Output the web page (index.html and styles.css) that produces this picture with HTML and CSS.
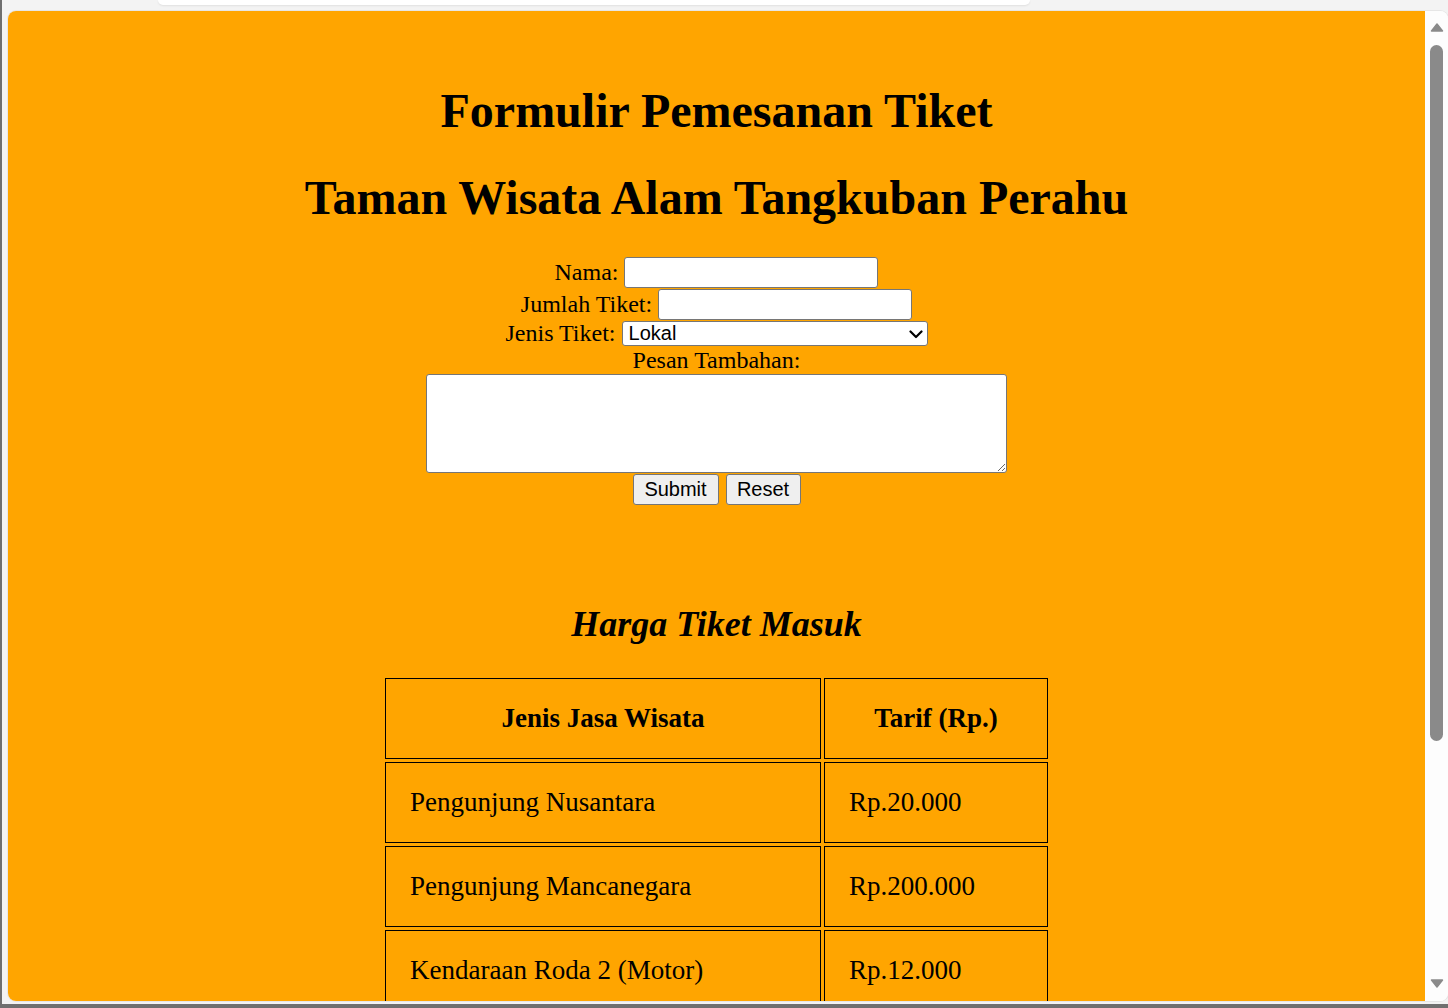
FILE: index.html
```html
<!DOCTYPE html>
<html lang="id">

<head>
     <meta charset="UTF-8">
     <meta name="viewport" content="width=device-width, initial-scale=1.0">
     <title>Formulir Pemesanan Tiket</title>
     <link rel="stylesheet" href="styles.css">
</head>

<body>
     <div class="screen">
          <div class="chromeTop">
               <div class="addressEdge"></div>
          </div>
          <div class="window">
               <main class="page">
                    <h1>Formulir Pemesanan Tiket</h1>
                    <h1>Taman Wisata Alam Tangkuban Perahu</h1>
                    <form class="orderForm">
                         <div class="field">
                              <label for="nama">Nama:</label>
                              <input type="text" id="nama" class="inputText">
                         </div>
                         <div class="field">
                              <label for="jumlah">Jumlah Tiket:</label>
                              <input type="text" id="jumlah" class="inputText">
                         </div>
                         <div class="field fieldSelect">
                              <label for="jenis">Jenis Tiket:</label>
                              <span class="selectWrap">
                                   <select id="jenis">
                                        <option>Lokal</option>
                                        <option>Mancanegara</option>
                                   </select>
                                   <svg class="chevron" width="14" height="9" viewBox="0 0 14 9">
                                        <path d="M1.5 1.5 L7 7 L12.5 1.5" fill="none" stroke="#000" stroke-width="2.2" stroke-linecap="round" stroke-linejoin="round" />
                                   </svg>
                              </span>
                         </div>
                         <div class="field fieldNote">
                              <label for="pesan">Pesan Tambahan:</label>
                         </div>
                         <textarea id="pesan"></textarea>
                         <div class="actions">
                              <button type="submit" class="btn btnSubmit">Submit</button>
                              <button type="reset" class="btn btnReset">Reset</button>
                         </div>
                    </form>

                    <h2>Harga Tiket Masuk</h2>
                    <table class="priceTable">
                         <tr>
                              <th class="colJenis">Jenis Jasa Wisata</th>
                              <th class="colTarif">Tarif (Rp.)</th>
                         </tr>
                         <tr>
                              <td>Pengunjung Nusantara</td>
                              <td>Rp.20.000</td>
                         </tr>
                         <tr>
                              <td>Pengunjung Mancanegara</td>
                              <td>Rp.200.000</td>
                         </tr>
                         <tr>
                              <td>Kendaraan Roda 2 (Motor)</td>
                              <td>Rp.12.000</td>
                         </tr>
                    </table>
               </main>
               <div class="scrollbar">
                    <svg class="arrow" width="14" height="10" viewBox="0 0 14 10">
                         <path d="M1.5 9 L7 2 L12.5 9 Z" fill="#8a8a8a" stroke="#8a8a8a" stroke-width="1.5" stroke-linejoin="round" />
                    </svg>
                    <div class="thumb"></div>
                    <svg class="arrow arrowDown" width="14" height="10" viewBox="0 0 14 10">
                         <path d="M1.5 1 L7 8 L12.5 1 Z" fill="#8a8a8a" stroke="#8a8a8a" stroke-width="1.5" stroke-linejoin="round" />
                    </svg>
               </div>
          </div>
     </div>
</body>

</html>
```

FILE: styles.css
```css
* {
     margin: 0px;
     padding: 0px;
     box-sizing: border-box;
}

body {
     background-color: #f3f3f3;
     font-family: "Liberation Serif", "Times New Roman", serif;
     overflow: hidden;
}

.screen {
     height: 1008px;
     border-left: 2px solid #6f6f6f;
     border-bottom: 4px solid #6f6f6f;
}

.chromeTop {
     height: 11px;
     padding-left: 156px;
}

.addressEdge {
     width: 872px;
     height: 5px;
     background-color: #fff;
     border-radius: 0px 0px 14px 14px;
     box-shadow: 0px 1px 2px rgba(0, 0, 0, 0.08);
}

.window {
     margin-left: 6px;
     height: 990px;
     display: flex;
     border-radius: 8px;
     overflow: hidden;
     background-color: #fdfdfd;
     box-shadow: 0px 0px 0px 1px #e6e6e6;
}

.page {
     flex: 1;
     background-color: orange;
     text-align: center;
     padding-top: 40px;
     overflow: hidden;
     font-size: 24px;
     color: #000;

     h1 {
          font-size: 48px;
          line-height: 55px;
          margin: 32px 0px 31px;
     }

     h2 {
          font-size: 36px;
          line-height: 41px;
          font-style: italic;
          margin: 99px 0px 30px;
     }
}

.orderForm {
     .field {
          display: flex;
          justify-content: center;
          align-items: center;
          gap: 6px;
          height: 32px;

          label {
               line-height: 28px;
               margin-top: -1px;
          }
     }

     .fieldSelect,
     .fieldNote {
          height: 27px;
     }

     .inputText {
          width: 254px;
          height: 31px;
          border: 1px solid #767676;
          border-radius: 3px;
          background-color: #fff;
          font-family: "Liberation Sans", Arial, sans-serif;
          font-size: 20px;
          padding: 1px 3px;
     }

     .selectWrap {
          position: relative;
          display: block;
          height: 25px;
     }

     select {
          appearance: none;
          display: block;
          width: 306px;
          height: 25px;
          padding: 0px 0px 0px 6px;
          font-family: "Liberation Sans", Arial, sans-serif;
          font-size: 20px;
          line-height: 23px;
          color: #000;
          border: 1px solid #767676;
          border-radius: 3px;
          background-color: #fff;
     }

     .chevron {
          position: absolute;
          right: 5px;
          top: 9px;
          pointer-events: none;
     }

     textarea {
          display: block;
          width: 581px;
          height: 99px;
          margin: 0px auto;
          border: 1px solid #767676;
          border-radius: 3px;
          background-color: #fff;
          font-family: "Liberation Mono", monospace;
          font-size: 20px;
     }

     .actions {
          display: flex;
          justify-content: center;
          gap: 7px;
          margin-top: 1px;
          height: 31px;
     }

     .btn {
          height: 31px;
          font-family: "Liberation Sans", Arial, sans-serif;
          font-size: 20px;
          color: #000;
          background-color: #efefef;
          border: 1px solid #767676;
          border-radius: 3px;
     }

     .btnSubmit {
          width: 86px;
     }

     .btnReset {
          width: 75px;
     }
}

.priceTable {
     margin: 0px auto;
     border-collapse: separate;
     border-spacing: 3px;

     th,
     td {
          border: 1px solid #000;
          padding: 0px 24px;
          line-height: 79px;
          font-size: 27px;
     }

     th {
          text-align: center;
     }

     td {
          text-align: left;
          font-weight: 400;
     }

     .colJenis {
          width: 436px;
     }

     .colTarif {
          width: 224px;
     }
}

.scrollbar {
     width: 23px;
     flex: none;
     display: flex;
     flex-direction: column;
     align-items: center;
     padding: 11px 0px 12px;
     background-color: #fdfdfd;

     .thumb {
          width: 13px;
          height: 696px;
          margin-top: 13px;
          border-radius: 7px;
          background-color: #8a8a8a;
     }

     .arrowDown {
          margin-top: auto;
     }
}
```
